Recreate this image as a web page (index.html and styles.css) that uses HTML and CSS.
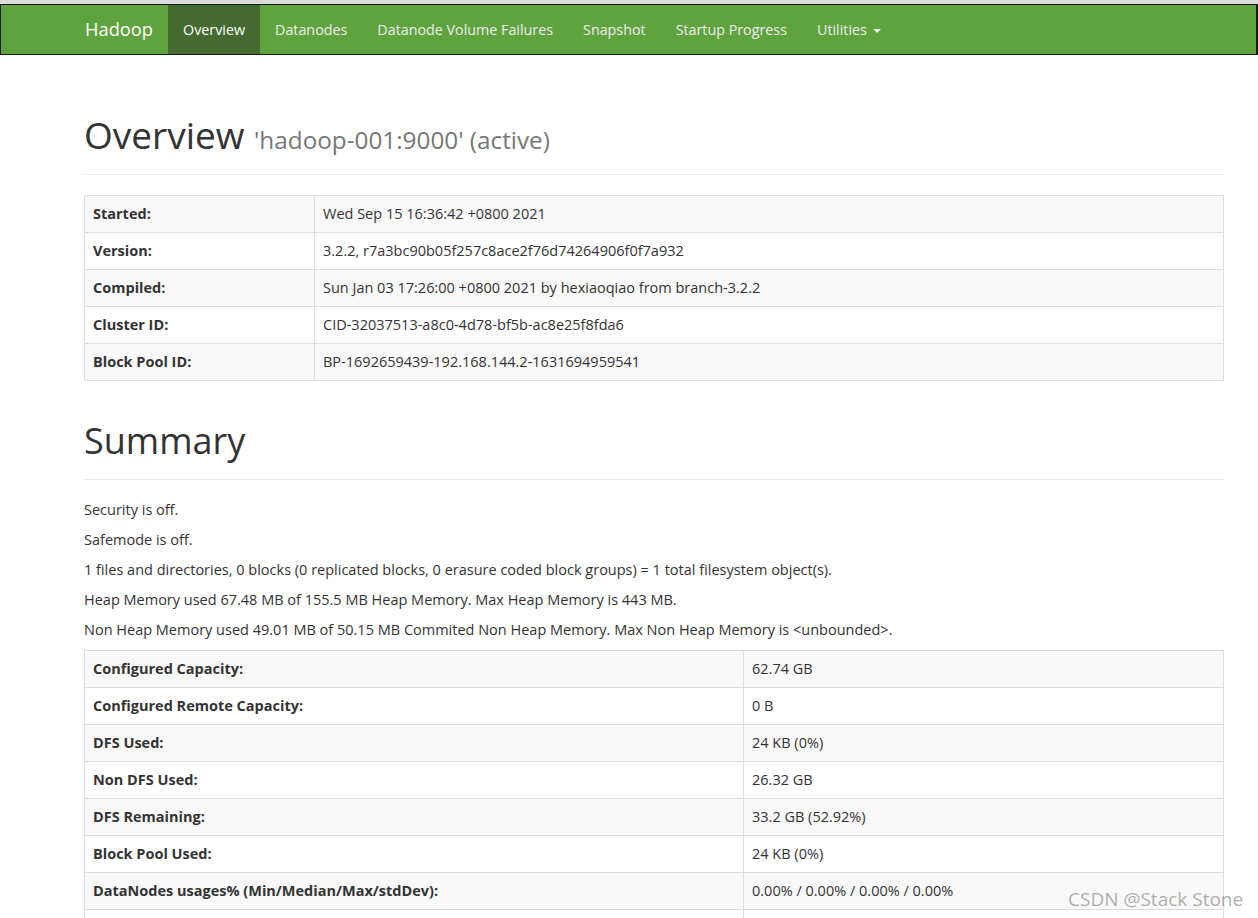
FILE: index.html
```html
<!DOCTYPE html>
<html>
<head>
<meta charset="utf-8">
<title>Namenode information</title>
<link rel="stylesheet" href="styles.css">
</head>
<body>
<div class="topstrip"></div>
<header class="navbar">
  <div class="nav-inner">
    <a class="brand" href="#">Hadoop</a>
    <ul class="nav">
      <li class="active"><a href="#">Overview</a></li>
      <li><a href="#">Datanodes</a></li>
      <li><a href="#">Datanode Volume Failures</a></li>
      <li><a href="#">Snapshot</a></li>
      <li><a href="#">Startup Progress</a></li>
      <li><a href="#">Utilities <span class="caret"></span></a></li>
    </ul>
  </div>
</header>

<main class="container">
  <div class="page-header first">
    <h1>Overview <small>'hadoop-001:9000' (active)</small></h1>
  </div>
  <table class="table info">
    <tr><th>Started:</th><td>Wed Sep 15 16:36:42 +0800 2021</td></tr>
    <tr><th>Version:</th><td>3.2.2, r7a3bc90b05f257c8ace2f76d74264906f0f7a932</td></tr>
    <tr><th>Compiled:</th><td>Sun Jan 03 17:26:00 +0800 2021 by hexiaoqiao from branch-3.2.2</td></tr>
    <tr><th>Cluster ID:</th><td>CID-32037513-a8c0-4d78-bf5b-ac8e25f8fda6</td></tr>
    <tr><th>Block Pool ID:</th><td>BP-1692659439-192.168.144.2-1631694959541</td></tr>
  </table>

  <div class="page-header">
    <h1>Summary</h1>
  </div>
  <p>Security is off.</p>
  <p>Safemode is off.</p>
  <p>1 files and directories, 0 blocks (0 replicated blocks, 0 erasure coded block groups) = 1 total filesystem object(s).</p>
  <p>Heap Memory used 67.48 MB of 155.5 MB Heap Memory. Max Heap Memory is 443 MB.</p>
  <p>Non Heap Memory used 49.01 MB of 50.15 MB Commited Non Heap Memory. Max Non Heap Memory is &lt;unbounded&gt;.</p>
  <table class="table summary">
    <tr><th>Configured Capacity:</th><td>62.74 GB</td></tr>
    <tr><th>Configured Remote Capacity:</th><td>0 B</td></tr>
    <tr><th>DFS Used:</th><td>24 KB (0%)</td></tr>
    <tr><th>Non DFS Used:</th><td>26.32 GB</td></tr>
    <tr><th>DFS Remaining:</th><td>33.2 GB (52.92%)</td></tr>
    <tr><th>Block Pool Used:</th><td>24 KB (0%)</td></tr>
    <tr><th>DataNodes usages% (Min/Median/Max/stdDev):</th><td>0.00% / 0.00% / 0.00% / 0.00%</td></tr>
    <tr class="tail"><th></th><td></td></tr>
  </table>
</main>
<div class="watermark">CSDN @Stack Stone</div>
</body>
</html>
```
FILE: styles.css
```css
html, body {
  margin: 0;
  padding: 0;
  background: #fff;
}
body {
  font-family: "Open Sans", "Noto Sans", "Liberation Sans", sans-serif;
  font-size: 14.5px;
  line-height: 20px;
  color: #333;
  overflow: hidden;
}
.topstrip {
  height: 4px;
  background: #dcdcdc;
}
.navbar {
  background: #5fa33e;
  border: 1px solid #1a1a1a;
  border-right-width: 2px;
  height: 49px;
}
.nav-inner {
  display: flex;
  align-items: stretch;
  height: 49px;
  padding-left: 69px;
}
.brand {
  display: block;
  padding: 14px 15px 15px;
  font-size: 18.3px;
  line-height: 20px;
  color: #fff;
  text-decoration: none;
}
.nav {
  display: flex;
  list-style: none;
  margin: 0;
  padding: 0;
  font-size: 14.3px;
}
.nav li a {
  display: block;
  padding: 15px 15px 14px;
  line-height: 20px;
  height: 20px;
  color: #eee;
  text-decoration: none;
}
.nav li.active a {
  background: #446a30;
  color: #fff;
}
.caret {
  display: inline-block;
  width: 0;
  height: 0;
  margin-left: 2px;
  vertical-align: middle;
  border-top: 4px solid #eee;
  border-left: 4px solid transparent;
  border-right: 4px solid transparent;
}
.container {
  width: 1140px;
  margin-left: 84px;
}
.page-header {
  margin: 40px 0 20px;
  padding-bottom: 9px;
  border-bottom: 1px solid #eee;
}
.page-header.first {
  margin-top: 55px;
}
h1 {
  margin: 0 0 10px;
  font-size: 36px;
  font-weight: 500;
  line-height: 39.6px;
  color: #333;
  font-family: inherit;
}
.first h1 {
  font-size: 37px;
  padding-top: 5px;
  margin-bottom: 5px;
}
h1 small {
  font-size: 24.3px;
  font-weight: 400;
  color: #777;
}
p {
  margin: 0 0 10px;
}
.table {
  width: 100%;
  border-collapse: collapse;
  border: 1px solid #ddd;
  margin-bottom: 20px;
}
.table th, .table td {
  border: 1px solid #ddd;
  padding: 8px;
  line-height: 20px;
  height: 20px;
  text-align: left;
  vertical-align: top;
}
.table th {
  font-weight: 700;
}
.table tr:nth-child(odd) {
  background: #f9f9f9;
}
.info th {
  width: 213px;
}
.summary th {
  width: 642px;
}
.watermark {
  position: absolute;
  left: 1068px;
  top: 887px;
  font-size: 19px;
  line-height: 24px;
  color: rgba(120, 120, 120, 0.6);
  white-space: nowrap;
}
```
